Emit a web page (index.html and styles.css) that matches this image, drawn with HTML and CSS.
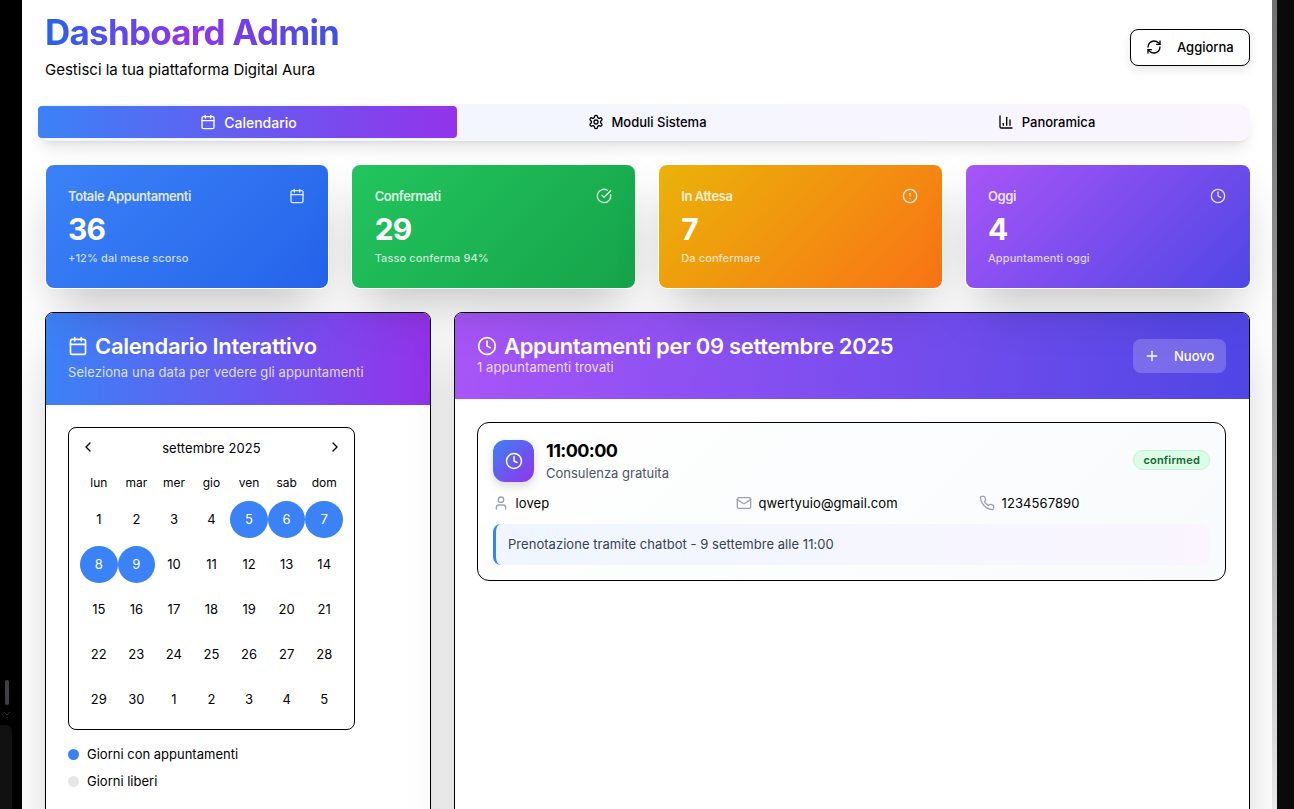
FILE: index.html
```html
<!doctype html>
<html lang="it">
<head>
<meta charset="utf-8">
<meta name="viewport" content="width=device-width, initial-scale=1">
<title>Dashboard Admin</title>
<link rel="stylesheet" href="styles.css">
</head>
<body>

<svg class="sprite" aria-hidden="true">
	<symbol id="i-calendar" viewBox="0 0 24 24"><path d="M8 2v4"/><path d="M16 2v4"/><rect x="3" y="4" width="18" height="18" rx="2"/><path d="M3 10h18"/></symbol>
	<symbol id="i-refresh" viewBox="0 0 24 24"><path d="M3 12a9 9 0 0 1 9-9 9.75 9.75 0 0 1 6.74 2.74L21 8"/><path d="M21 3v5h-5"/><path d="M21 12a9 9 0 0 1-9 9 9.75 9.75 0 0 1-6.74-2.74L3 16"/><path d="M8 16H3v5"/></symbol>
	<symbol id="i-settings" viewBox="0 0 24 24"><path d="M12.22 2h-.44a2 2 0 0 0-2 2v.18a2 2 0 0 1-1 1.73l-.43.25a2 2 0 0 1-2 0l-.15-.08a2 2 0 0 0-2.73.73l-.22.38a2 2 0 0 0 .73 2.73l.15.1a2 2 0 0 1 1 1.72v.51a2 2 0 0 1-1 1.74l-.15.09a2 2 0 0 0-.73 2.73l.22.38a2 2 0 0 0 2.73.73l.15-.08a2 2 0 0 1 2 0l.43.25a2 2 0 0 1 1 1.73V20a2 2 0 0 0 2 2h.44a2 2 0 0 0 2-2v-.18a2 2 0 0 1 1-1.73l.43-.25a2 2 0 0 1 2 0l.15.08a2 2 0 0 0 2.73-.73l.22-.39a2 2 0 0 0-.73-2.73l-.15-.08a2 2 0 0 1-1-1.74v-.5a2 2 0 0 1 1-1.74l.15-.09a2 2 0 0 0 .73-2.73l-.22-.38a2 2 0 0 0-2.73-.73l-.15.08a2 2 0 0 1-2 0l-.43-.25a2 2 0 0 1-1-1.73V4a2 2 0 0 0-2-2z"/><circle cx="12" cy="12" r="3"/></symbol>
	<symbol id="i-chart" viewBox="0 0 24 24"><path d="M3 3v16a2 2 0 0 0 2 2h16"/><path d="M18 17V9"/><path d="M13 17V5"/><path d="M8 17v-3"/></symbol>
	<symbol id="i-check" viewBox="0 0 24 24"><path d="M21.801 10A10 10 0 1 1 17 3.335"/><path d="m9 11 3 3L22 4"/></symbol>
	<symbol id="i-alert" viewBox="0 0 24 24"><circle cx="12" cy="12" r="10"/><path d="M12 8v4"/><path d="M12 16h.01"/></symbol>
	<symbol id="i-clock" viewBox="0 0 24 24"><circle cx="12" cy="12" r="10"/><path d="M12 6v6l4 2"/></symbol>
	<symbol id="i-plus" viewBox="0 0 24 24"><path d="M5 12h14"/><path d="M12 5v14"/></symbol>
	<symbol id="i-user" viewBox="0 0 24 24"><path d="M19 21v-2a4 4 0 0 0-4-4H9a4 4 0 0 0-4 4v2"/><circle cx="12" cy="7" r="4"/></symbol>
	<symbol id="i-mail" viewBox="0 0 24 24"><rect x="2" y="4" width="20" height="16" rx="2"/><path d="m22 7-8.97 5.7a1.94 1.94 0 0 1-2.06 0L2 7"/></symbol>
	<symbol id="i-phone" viewBox="0 0 24 24"><path d="M22 16.92v3a2 2 0 0 1-2.18 2 19.79 19.79 0 0 1-8.63-3.07 19.5 19.5 0 0 1-6-6 19.79 19.79 0 0 1-3.07-8.67A2 2 0 0 1 4.11 2h3a2 2 0 0 1 2 1.72 12.84 12.84 0 0 0 .7 2.81 2 2 0 0 1-.45 2.11L8.09 9.91a16 16 0 0 0 6 6l1.27-1.27a2 2 0 0 1 2.11-.45 12.84 12.84 0 0 0 2.81.7A2 2 0 0 1 22 16.92z"/></symbol>
	<symbol id="i-left" viewBox="0 0 24 24"><path d="m15 18-6-6 6-6"/></symbol>
	<symbol id="i-right" viewBox="0 0 24 24"><path d="m9 18 6-6-6-6"/></symbol>
</svg>

<div class="window">

	<aside class="edgeLeft">
		<div class="edgeThumb"></div>
		<svg class="edgeChevron" viewBox="0 0 8 5"><path d="M1 1l3 3 3-3"/></svg>
		<div class="edgeBox"></div>
	</aside>

	<div class="page">

		<header class="pageHeader">
			<div>
				<h1 class="pageTitle">Dashboard Admin</h1>
				<p class="pageSubtitle">Gestisci la tua piattaforma Digital Aura</p>
			</div>
			<button class="btnRefresh"><svg class="icon icon16"><use href="#i-refresh"/></svg>Aggiorna</button>
		</header>

		<nav class="tabs">
			<a class="tab tabActive"><svg class="icon icon16"><use href="#i-calendar"/></svg>Calendario</a>
			<a class="tab tabMiddle"><svg class="icon icon16"><use href="#i-settings"/></svg>Moduli Sistema</a>
			<a class="tab tabLast"><svg class="icon icon16"><use href="#i-chart"/></svg>Panoramica</a>
		</nav>

		<section class="stats">
			<div class="stat statBlue">
				<div class="statTop"><span>Totale Appuntamenti</span><svg class="icon icon16"><use href="#i-calendar"/></svg></div>
				<div class="statValue">36</div>
				<div class="statNote">+12% dal mese scorso</div>
			</div>
			<div class="stat statGreen">
				<div class="statTop"><span>Confermati</span><svg class="icon icon16"><use href="#i-check"/></svg></div>
				<div class="statValue">29</div>
				<div class="statNote">Tasso conferma 94%</div>
			</div>
			<div class="stat statOrange">
				<div class="statTop"><span>In Attesa</span><svg class="icon icon16"><use href="#i-alert"/></svg></div>
				<div class="statValue">7</div>
				<div class="statNote">Da confermare</div>
			</div>
			<div class="stat statPurple">
				<div class="statTop"><span>Oggi</span><svg class="icon icon16"><use href="#i-clock"/></svg></div>
				<div class="statValue">4</div>
				<div class="statNote">Appuntamenti oggi</div>
			</div>
		</section>

		<section class="panels">

			<div class="panel">
				<div class="panelHead panelHeadCal">
					<h2 class="panelTitle"><svg class="icon icon20"><use href="#i-calendar"/></svg>Calendario Interattivo</h2>
					<p class="panelSub">Seleziona una data per vedere gli appuntamenti</p>
				</div>
				<div class="panelBody">
					<div class="calendar">
						<div class="calHead">
							<svg class="icon icon16"><use href="#i-left"/></svg>
							<span>settembre 2025</span>
							<svg class="icon icon16"><use href="#i-right"/></svg>
						</div>
						<div class="calGrid">
							<span class="calDow">lun</span><span class="calDow">mar</span><span class="calDow">mer</span><span class="calDow">gio</span><span class="calDow">ven</span><span class="calDow">sab</span><span class="calDow">dom</span>
							<span class="calDay">1</span><span class="calDay">2</span><span class="calDay">3</span><span class="calDay">4</span><span class="calDay calBusy">5</span><span class="calDay calBusy">6</span><span class="calDay calBusy">7</span>
							<span class="calDay calBusy">8</span><span class="calDay calBusy">9</span><span class="calDay">10</span><span class="calDay">11</span><span class="calDay">12</span><span class="calDay">13</span><span class="calDay">14</span>
							<span class="calDay">15</span><span class="calDay">16</span><span class="calDay">17</span><span class="calDay">18</span><span class="calDay">19</span><span class="calDay">20</span><span class="calDay">21</span>
							<span class="calDay">22</span><span class="calDay">23</span><span class="calDay">24</span><span class="calDay">25</span><span class="calDay">26</span><span class="calDay">27</span><span class="calDay">28</span>
							<span class="calDay">29</span><span class="calDay">30</span><span class="calDay">1</span><span class="calDay">2</span><span class="calDay">3</span><span class="calDay">4</span><span class="calDay">5</span>
						</div>
					</div>
					<ul class="legend">
						<li><i class="dot dotBlue"></i>Giorni con appuntamenti</li>
						<li><i class="dot dotGray"></i>Giorni liberi</li>
					</ul>
				</div>
			</div>

			<div class="panel">
				<div class="panelHead panelHeadAppt">
					<div class="panelHeadText">
						<h2 class="panelTitle"><svg class="icon icon20"><use href="#i-clock"/></svg>Appuntamenti per 09 settembre 2025</h2>
						<p class="panelSub panelSubTight">1 appuntamenti trovati</p>
					</div>
					<button class="btnNew"><svg class="icon icon16"><use href="#i-plus"/></svg>Nuovo</button>
				</div>
				<div class="panelBody panelBodyAppt">
					<article class="appt">
						<div class="apptTop">
							<div class="apptIcon"><svg class="icon icon18"><use href="#i-clock"/></svg></div>
							<div class="apptInfo">
								<div class="apptTime">11:00:00</div>
								<div class="apptType">Consulenza gratuita</div>
							</div>
							<span class="badge">confirmed</span>
						</div>
						<div class="apptDetails">
							<span class="detail"><svg class="icon icon16"><use href="#i-user"/></svg>lovep</span>
							<span class="detail"><svg class="icon icon16"><use href="#i-mail"/></svg>qwertyuio@gmail.com</span>
							<span class="detail"><svg class="icon icon16"><use href="#i-phone"/></svg>1234567890</span>
						</div>
						<div class="apptNote">Prenotazione tramite chatbot - 9 settembre alle 11:00</div>
					</article>
				</div>
			</div>

		</section>

	</div>

	<aside class="edgeRight"></aside>

</div>

</body>
</html>
```

FILE: styles.css
```css
* { box-sizing: border-box; }

html, body { height: 100%; }

body { background-color: #000; color: #000; font: 14px "Inter", "Liberation Sans", sans-serif; margin: 0; overflow: hidden; }

h1, h2, p, ul { margin: 0; padding: 0; }

button { font: inherit; cursor: pointer; }

.sprite { display: none; }

.icon { fill: none; flex: none; stroke: currentColor; stroke-linecap: round; stroke-linejoin: round; stroke-width: 2; }
.icon16 { height: 16px; width: 16px; }
.icon18 { height: 18px; width: 18px; }
.icon20 { height: 20px; width: 20px; }

.window { display: flex; height: 809px; overflow: hidden; }


/* window edges */

.edgeLeft { background-color: #000; flex: 0 0 22px; padding-top: 680px; }
.edgeThumb { background-color: #3f3f46; border-radius: 2px; height: 25px; margin-left: 5px; width: 4px; }
.edgeChevron { display: block; fill: none; height: 5px; margin: 6px 0 0 3px; stroke: #333; width: 8px; }
.edgeBox { background-color: #111; border-radius: 0 6px 0 0; height: 90px; margin-top: 9px; width: 12px; }

.edgeRight { background: linear-gradient( #707070, #a8a8a8 60%, #e8e8e8 ) left top / 5px 100% no-repeat, #0a0a0a; flex: 0 0 22px; }


/* page */

.page { background-color: #fff; flex: 0 0 1250px; overflow: hidden; padding: 0 22px 0 16px; }

.pageHeader { align-items: flex-start; display: flex; justify-content: space-between; padding: 12px 0 0 7px; }

.pageTitle { background: linear-gradient( 90deg, #2563eb, #9333ea, #3f51e5 ); -webkit-background-clip: text; background-clip: text; color: transparent;
	font-size: 35px; font-weight: 700; letter-spacing: -0.76px; line-height: 40px; }

.pageSubtitle { font-size: 15px; line-height: 20px; margin-top: 8px; }

.btnRefresh { align-items: center; background-color: #fff; border: 1px solid #000; border-radius: 8px; box-shadow: 0 4px 10px rgba( 0, 0, 0, 0.1 );
	display: flex; font-size: 13px; font-weight: 500; gap: 15px; height: 37px; margin-top: 17px; padding: 0 15px 2px; width: 120px; }


/* tabs */

.tabs { background: linear-gradient( 90deg, #eff6ff, #faf5ff ); border-radius: 12px; box-shadow: 0 10px 15px -3px rgba( 0, 0, 0, 0.1 ), 0 4px 6px -4px rgba( 0, 0, 0, 0.1 );
	display: grid; grid-template-columns: 419px 381px 1fr; height: 37px; margin-top: 24px; padding: 2px 0 3px; }

.tab { align-items: center; border-radius: 4px; display: flex; font-size: 13px; font-weight: 500; gap: 8px; justify-content: center; }

.tabActive { background: linear-gradient( 90deg, #3b82f6, #9333ea ); color: #fff; font-size: 14px; padding-left: 2px; }

.tabMiddle { gap: 7px; }

.tabLast { padding-left: 5px; }


/* stats, their shadows fall over the panel heads */

.stats { display: grid; gap: 21.87px; grid-template-columns: repeat( 4, 284.8px ); margin: 23px 0 0 6.6px; position: relative; z-index: 1; }

.stat { border: 1px solid #fff; border-radius: 9px; box-shadow: 0 25px 50px -12px rgba( 0, 0, 0, 0.25 ); color: #fff; height: 125px; padding: 23px 23.5px 23px 22.4px; }

.statBlue { background: linear-gradient( 135deg, #3b82f6, #2563eb ); }
.statGreen { background: linear-gradient( 135deg, #22c55e, #16a34a ); }
.statOrange { background: linear-gradient( 135deg, #eab308, #f97316 ); }
.statPurple { background: linear-gradient( 135deg, #a855f7, #4f46e5 ); margin-right: -1.5px; }

.statTop { align-items: center; color: rgba( 255, 255, 255, 0.85 ); display: flex; font-size: 13px; font-weight: 600; justify-content: space-between; height: 16px; letter-spacing: -0.42px; }

.statValue { font-size: 30px; font-weight: 700; letter-spacing: -0.8px; line-height: 36px; margin-top: 7px; }

.statNote { color: rgba( 255, 255, 255, 0.75 ); font-size: 11px; font-weight: 500; letter-spacing: 0.1px; line-height: 16px; margin-top: 3px; }


/* panels */

.panels { display: grid; gap: 23px; grid-template-columns: 386px 1fr; margin: 23px 0 0 7px; }

.panel { background-color: #fff; border: 1px solid #000; border-radius: 8px; box-shadow: 0 25px 50px -12px rgba( 0, 0, 0, 0.25 ); height: 540px; overflow: hidden; }

.panelHead { color: #fff; padding: 0 22px; }

.panelHeadCal { background: linear-gradient( 90deg, #3b82f6, #9333ea ); height: 92px; padding-top: 20px; }

.panelHeadAppt { align-items: center; background: linear-gradient( 95deg, #a855f7, #4f46e5 ); display: flex; height: 86px; justify-content: space-between; padding-right: 23px; }

.panelHeadText { margin-bottom: 4px; }

.panelTitle { align-items: center; display: flex; font-size: 22px; font-weight: 600; gap: 7px; letter-spacing: -0.32px; line-height: 26px; }

.panelSub { color: rgba( 255, 255, 255, 0.8 ); font-size: 13px; letter-spacing: 0.07px; line-height: 18px; margin-top: 4px; }
.panelSubTight { margin-top: -1px; }

.btnNew { align-items: center; background-color: rgba( 255, 255, 255, 0.2 ); border: 0; border-radius: 8px; color: #fff; display: flex; font-size: 13px; font-weight: 500;
	gap: 14px; height: 34px; padding: 0 11px; width: 93px; }

.panelBody { padding: 22px; }


/* calendar */

.calendar { border: 1px solid #000; border-radius: 8px; height: 303px; padding: 11px; width: 287px; }

.calHead { align-items: center; display: flex; font-size: 13px; justify-content: space-between; letter-spacing: 0.1px; line-height: 18px; }

.calHead .icon { margin-top: -3px; }

.calGrid { display: grid; grid-template-columns: repeat( 7, 1fr ); margin-top: 16px; }

.calDow { font-size: 12px; height: 27px; line-height: 20px; text-align: center; }

.calDay { font-size: 13px; height: 37.5px; line-height: 37px; margin: 0.5px 0 7px; text-align: center; }

.calBusy { background-color: #3b82f6; border-radius: 50%; color: #fff; }

.legend { list-style: none; margin-top: 14px; }

.legend li { align-items: center; display: flex; font-size: 13px; gap: 8px; height: 20px; margin-bottom: 7px; }

.dot { border-radius: 50%; height: 11px; width: 11px; }
.dotBlue { background-color: #3b82f6; }
.dotGray { background-color: #e5e7eb; }


/* appointment */

.panelBodyAppt { padding: 23px 23px 0 22px; }

.appt { background: linear-gradient( 135deg, #fff, #f8fafc ); border: 1px solid #000; border-radius: 12px; height: 159px; padding: 16px 15px; }

.apptTop { align-items: center; display: flex; }

.apptIcon { align-items: center; background: linear-gradient( 135deg, #3b82f6, #9333ea ); border-radius: 12px; box-shadow: 0 4px 10px rgba( 0, 0, 0, 0.15 ); color: #fff;
	display: flex; height: 42px; justify-content: center; margin-right: 12px; width: 41px; }

.apptInfo { flex: 1; }

.apptTime { font-size: 18px; font-weight: 700; letter-spacing: -0.6px; line-height: 24px; }

.apptType { color: #4b5563; font-size: 13px; line-height: 20px; }

.badge { background-color: #dcfce7; border: 1px solid #bbf7d0; border-radius: 10px; color: #166534; font-size: 11px; font-weight: 600; height: 20px; letter-spacing: 0.2px; line-height: 18px; margin-top: -2px; padding: 0 9px; }

.apptDetails { display: grid; gap: 12px; grid-template-columns: repeat( 3, 1fr ); margin-top: 10px; }

.detail { align-items: center; display: flex; font-size: 13px; gap: 6.5px; height: 20px; letter-spacing: 0.1px; }

.detail .icon { color: #9ca3af; }

.apptNote { background: linear-gradient( 90deg, #eff6ff, #faf5ff ); border-left: 3px solid #3b82f6; border-radius: 8px; color: #374151; font-size: 13px; height: 41px; letter-spacing: 0.04px; line-height: 40px; margin-top: 11px; padding-left: 12px; }
```
